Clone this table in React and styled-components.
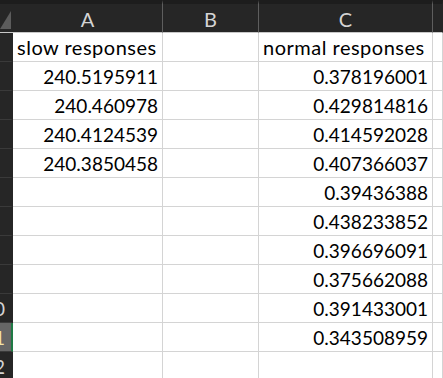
import React from 'react';
import styled, { createGlobalStyle } from 'styled-components';

const GlobalStyle = createGlobalStyle`
  html, body {
    margin: 0;
    padding: 0;
    background: #fff;
    overflow: hidden;
  }
`;

const Sheet = styled.div`
  display: grid;
  grid-template-columns: 13px 150px 96px 174px 1fr;
  grid-template-rows: 33px;
  grid-auto-rows: 29px;
  width: 443px;
  height: 378px;
  overflow: hidden;
  font-family: Lato, "Open Sans", sans-serif;
  font-size: 19px;
  color: #000;
`;

const Corner = styled.div`
  position: relative;
  background: #262626;
  border-top: 4px solid #1d1d1d;
  border-bottom: 1px solid #c8c8c8;
  overflow: hidden;
  &::after {
    content: '';
    position: absolute;
    right: 2px;
    bottom: 3px;
    width: 0;
    height: 0;
    border-left: 11px solid transparent;
    border-bottom: 18px solid #5c5c5c;
  }
`;

const ColHead = styled.div`
  display: flex;
  align-items: center;
  justify-content: center;
  background: #262626;
  border-top: 4px solid #1d1d1d;
  border-bottom: 1px solid #c8c8c8;
  border-right: 1px solid ${(p) => (p.$last ? 'transparent' : '#5e5e5e')};
  color: #d4d4d4;
  font-size: 20px;
  padding-top: 1px;
`;

const RowHead = styled.div`
  display: flex;
  justify-content: flex-end;
  align-items: center;
  overflow: hidden;
  background: ${(p) => (p.$active ? '#666666' : '#262626')};
  color: ${(p) => (p.$active ? '#f2e3a6' : '#d4d4d4')};
  border-bottom: 1px solid #3a3a3a;
  border-right: 2px solid ${(p) => (p.$active ? '#1f7a45' : '#262626')};
`;

const RowNum = styled.span`
  flex-shrink: 0;
  width: 34px;
  text-align: center;
  font-size: 19px;
`;

const Cell = styled.div`
  display: flex;
  align-items: center;
  justify-content: ${(p) => (p.$num ? 'flex-end' : 'flex-start')};
  padding: 0 ${(p) => (p.$num ? '4px' : '0')} 0 ${(p) => (p.$num ? '0' : '4px')};
  border-right: 1px solid #d4d4d4;
  border-bottom: 1px solid #d4d4d4;
  white-space: nowrap;
  overflow: hidden;
  font-size: ${(p) => (p.$num ? '19px' : '20px')};
  letter-spacing: ${(p) => (p.$num ? '0' : '0.5px')};
`;

const rows = [
  ['slow responses', '', 'normal responses'],
  ['240.5195911', '', '0.378196001'],
  ['240.460978', '', '0.429814816'],
  ['240.4124539', '', '0.414592028'],
  ['240.3850458', '', '0.407366037'],
  ['', '', '0.39436388'],
  ['', '', '0.438233852'],
  ['', '', '0.396696091'],
  ['', '', '0.375662088'],
  ['', '', '0.391433001'],
  ['', '', '0.343508959'],
  ['', '', ''],
];

const isNum = (v) => v !== '' && !isNaN(Number(v));

const App = () => {
  return (
    <>
      <GlobalStyle />
      <Sheet>
        <Corner />
        <ColHead>A</ColHead>
        <ColHead>B</ColHead>
        <ColHead>C</ColHead>
        <ColHead $last />
        {rows.map((r, i) => (
          <React.Fragment key={i}>
            <RowHead $active={i === 10}>
              <RowNum>{i + 1}</RowNum>
            </RowHead>
            {r.map((v, j) => (
              <Cell key={j} $num={isNum(v)}>
                {v}
              </Cell>
            ))}
            <Cell />
          </React.Fragment>
        ))}
      </Sheet>
    </>
  );
};

export default App;
